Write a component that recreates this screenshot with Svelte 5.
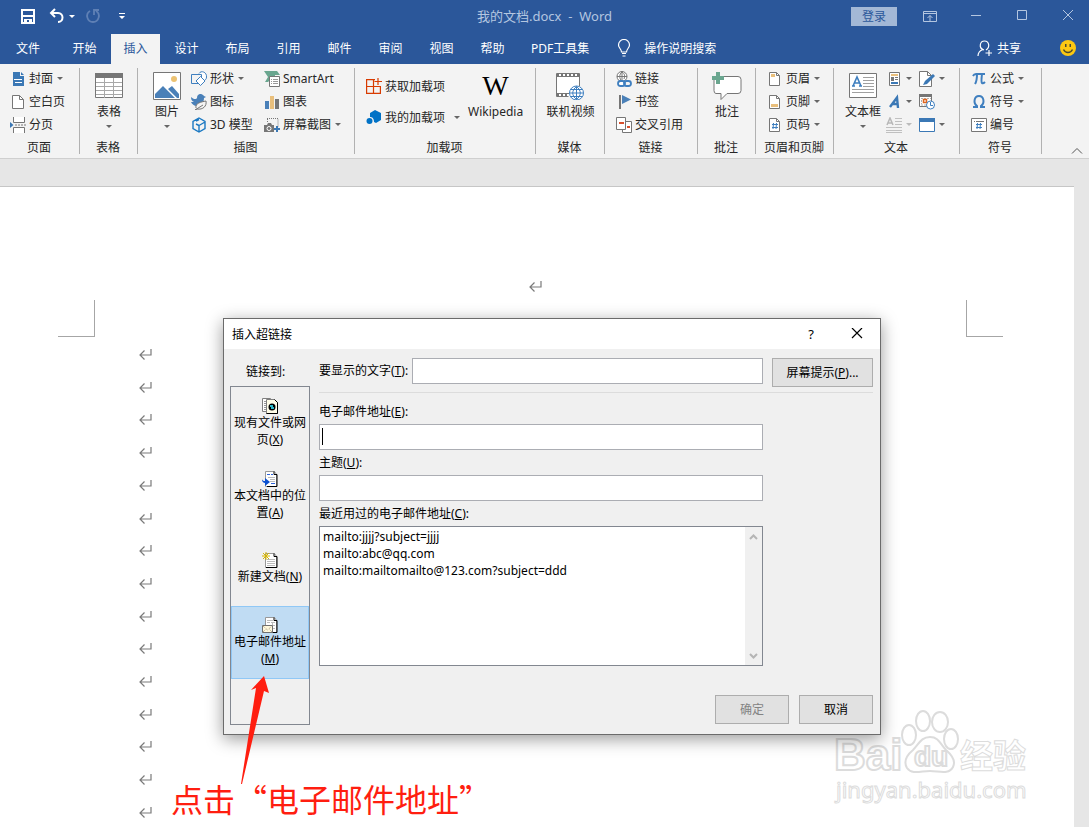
<script>
  const page = 'fill="#fff" stroke="#767676"';

  // Each icon: width, height, svg body
  const icons = {
    cover: [16, 16, '<path fill="#3b78b5" d="M3 1h7v4h4v10H3z"/><path fill="#3b78b5" d="M11 1l3 3h-3z"/><path fill="none" stroke="#fff" d="M4 9l1-1 1 1 1-1 1 1 1-1 1 1 1-1 1 1M5 11.500h7"/>'],
    blank: [16, 16, `<path ${page} d="M2.500 1.500h7l4 4v9h-11z"/><path fill="none" stroke="#767676" d="M9.500 1.500v4h4"/>`],
    pageBreak: [16, 16, '<path fill="#fff" d="M3 0h12v5H3zM3 10h12v6H3z"/><path fill="none" stroke="#767676" d="M3.500 0v5.500h11V0M3.500 16v-5.500h11V16"/><path stroke="#767676" d="M5 8h2M8 8h2M11 8h2M14 8h2"/><path fill="#3b78b5" d="M0 5l3.500 3L0 11z"/>'],
    table: [28, 28, '<path fill="#fff" stroke="#767676" d="M.5 1.500h27v24H.500z"/><path fill="#767676" d="M0 1h28v5H0z"/><path stroke="#a8a8a8" d="M1 10.500h26M1 14.500h26M1 18.500h26M1 22.500h26M9.500 6v20M18.500 6v20"/>'],
    picture: [28, 28, '<path fill="#fff" stroke="#767676" d="M.5.5h27v27H.500z"/><circle cx="21" cy="7" r="3" fill="#ecc272"/><path fill="#4a80b8" d="M2 26v-4l8-8 12 12zM15 17l4-3 7 8v4h-2z"/>'],
    shapes: [16, 16, '<path fill="#fff" stroke="#3f7fbf" d="M8 2.500C10-1 16 1 15.500 6c0 2-1 3-3 4"/><path fill="#f3f3f3" stroke="#3f7fbf" d="M.5 3.500h10v9H.500z"/><path fill="#fff" stroke="#3f7fbf" d="M9.500 5.500l4.500 4.500-4.500 4.500L5 10z"/>'],
    pictogram: [16, 16, '<path fill="#4a80b8" d="M0 3c2 2 5 3 6 1 0-5 5-5 7-2l2 1-2 1c0 5-3 8-7 8-3 0-5-2-6-4h3C1 7 0 6 0 3z"/><path fill="#f3f3f3" stroke="#767676" d="M5 14c-1-5 5-6 10-7 1 5-3 9-9 8l-2 1 8-5"/>'],
    model: [16, 16, '<path fill="none" stroke="#1a78c2" stroke-width="1.400" d="M8 1l6 3.500v7L8 15l-6-3.500v-7zM5 7l3 1.500V15M8 8.500L14 5M5 4l3-1.500"/>'],
    smartart: [16, 16, '<path fill="#6aa68f" d="M0 0h13l3 4h-5v4H7L4 11H1l3-5z"/><path fill="#fff" stroke="#767676" d="M5.500 5.500h10v10h-10z"/><path stroke="#999" d="M7 8.500h1M9 8.500h5M7 10.500h1M9 10.500h5M7 12.500h1M9 12.500h5"/>'],
    chart: [16, 16, '<path fill="#4a80b8" d="M1 7h4v8H1z"/><path fill="#e9bf7c" d="M6 2h4v13H6z"/><path fill="#767676" d="M11 5h4v10h-4z"/>'],
    screenshot: [16, 16, '<path fill="none" stroke="#767676" stroke-dasharray="1 1" d="M3 1.500h11v9M3.500 2v4"/><path fill="#767676" d="M0 8h3l1-2h3l1 2h2v7H0z"/><circle cx="5" cy="11.500" r="2" fill="none" stroke="#fff"/><path stroke="#3b78b5" stroke-width="2" d="M13 9v6M10 12h6"/>'],
    store: [16, 16, '<path fill="none" stroke="#d83b01" stroke-width="1.200" d="M9 1.600H.600v13.800h13.800V8.500H.600M7.500 1.600v13.800M12 0v7M8.500 3.500H16"/>'],
    addins: [16, 16, '<path fill="#0072c6" d="M9 1l6 3v7l-5 3-2-1c0-4-2-5-4-5V4z"/><circle cx="3.500" cy="12" r="3" fill="#0072c6"/>'],
    video: [28, 28, '<path fill="#fff" d="M1 2h23v22H1z"/><path fill="none" stroke="#767676" d="M.5 1.500v23h12M.5 1.500h23V14M1 4.500h23M1 21.500h12"/><path stroke="#767676" stroke-width="3" stroke-dasharray="2 2" d="M1 3h23M1 23h12"/><circle cx="20.500" cy="21" r="7" fill="#fff" stroke="#3f7fbf"/><path fill="none" stroke="#3f7fbf" d="M14 21h13M15 17.500h11M15 24.500h11M20.500 14.500v13M20.500 14.500c-5 4-5 9 0 13 5-4 5-9 0-13"/>'],
    link: [16, 16, '<circle cx="6" cy="5.500" r="5" fill="#fff" stroke="#767676"/><path fill="none" stroke="#767676" d="M1 5.500h10M6 0v9M6 1C3 3 3 8 6 10M6 1c3 2 3 4 2 7"/><rect x="2" y="10" width="7" height="5" rx="2.500" fill="#fff" stroke="#3f7fbf" stroke-width="1.800"/><rect x="8" y="10" width="7" height="5" rx="2.500" fill="none" stroke="#3f7fbf" stroke-width="1.800"/>'],
    bookmark: [16, 16, '<path fill="#767676" d="M3 1h2v14H3z"/><path fill="#4a80b8" d="M6 1l9 4.500L6 10z"/>'],
    crossRef: [16, 16, '<path fill="#fff" stroke="#767676" d="M6.500 4.500h9v11h-9z"/><path fill="#fff" stroke="#767676" d="M.5.5h9v12h-9z"/><path fill="#d9502e" d="M3 5h5v2H3zM11 9h3v2h-3z"/>'],
    comment: [30, 28, '<path fill="#fff" stroke="#767676" d="M5 4.500h21q3 0 3 3v11q0 3-3 3H15l-6 6v-6H4q-2 0-2-3V6"/><path fill="#6aa68f" d="M4 0h4v4h4v4H8v4H4V8H0V4h4z"/>'],
    header: [16, 16, `<path ${page} d="M2.500 1.500h7l3 3v10h-10z"/><path fill="none" stroke="#767676" d="M9.500 1.500v3h3"/><path fill="#e9bf7c" d="M4 3h4v3H4z"/>`],
    footer: [16, 16, `<path ${page} d="M2.500 1.500h7l3 3v10h-10z"/><path fill="none" stroke="#767676" d="M9.500 1.500v3h3"/><path fill="#e9bf7c" d="M4 10h7v3H4z"/>`],
    pageNo: [16, 16, `<path ${page} d="M2.500 1.500h7l3 3v10h-10z"/><path fill="none" stroke="#767676" d="M9.500 1.500v3h3"/><path stroke="#3f7fbf" d="M6.500 6l-.500 6M9.500 6l-.500 6M5 7.500h6M5 10.500h6"/>`],
    textBox: [28, 28, '<path fill="#fff" stroke="#767676" d="M.5 1.500h27v24H.500z"/><path fill="none" stroke="#3f7fbf" stroke-width="1.600" d="M4 14l4-9 4 9M5 11h6M3 14h3M10 14h3"/><path stroke="#a0a0a0" d="M14 5.500h11M14 8.500h11M14 11.500h11M14 14.500h11M3 17.500h22M3 20.500h22"/>'],
    parts: [16, 16, '<path fill="#fff" stroke="#767676" d="M3.500 1.500h10v13h-10z"/><path fill="#e9bf7c" d="M5 3h7v2H5z"/><path fill="#767676" d="M5 6h3v4H5zM9 6h3v1H9zM9 8h3v1H9z"/><path fill="#3b78b5" d="M5 11h7v2H5z"/>'],
    signature: [16, 16, `<path ${page} d="M.5.5h8l4 4v11H.500z"/><path fill="none" stroke="#767676" d="M8.500.5v4h4"/><path fill="#3b78b5" d="M14 3l2 2-8 8-4 1 2-4z"/>`],
    wordArt: [16, 16, '<path fill="none" stroke="#3b78b5" stroke-width="2.400" d="M4 13L11 3.500l1 10.500M6 10h6"/>'],
    dateTime: [16, 16, '<path fill="#fff" stroke="#767676" d="M.5 1.500h12v11H.500z"/><path fill="#767676" d="M0 0h13v3H0z"/><path stroke="#b0b0b0" stroke-dasharray="2 1" d="M2 4.500h10M2 11h10M2.500 6v4"/><path fill="#fff" stroke="#e0651e" stroke-width="1.500" d="M4.500 5.500h3v3h-3z"/><circle cx="11.500" cy="11" r="4" fill="#fff" stroke="#3f7fbf"/><path fill="none" stroke="#3f7fbf" d="M11.500 8v3.500h2.500"/>'],
    dropCap: [16, 16, '<path fill="none" stroke="#b8b8b8" stroke-width="1.500" d="M1 8l3-7 3 7M2 6h4"/><path stroke="#c0c0c0" d="M9 1.500h7M9 4.500h7M9 7.500h7M0 10.500h16M0 13.500h16M0 15.500h16"/>'],
    object: [16, 16, '<path fill="#fff" stroke="#3b78b5" d="M.5 1.500h15v13H.500z"/><path fill="#3b78b5" d="M0 1h16v4H0z"/>'],
    pi: [16, 16, '<path fill="none" stroke="#3f7fbf" stroke-width="2" d="M2 5q1-2 3-2h9M6 3q0 7-2 10M11 3q-1 8 0 9 1 1 3-1"/>'],
    omega: [16, 16, '<path fill="none" stroke="#3f7fbf" stroke-width="2" d="M2 13h4v-1C2 9 3 2 8 2s6 7 2 10v1h4"/>'],
    number: [16, 16, '<path fill="#fff" stroke="#767676" d="M.5 1.500h15v13H.500z"/><path stroke="#767676" d="M3 4.500h1M5 4.500h8"/><path stroke="#3f7fbf" d="M6.500 6l-.500 6M9.500 6l-.500 6M5 7.500h6M5 10.500h6"/>'],
    save: [16, 16, '<path fill="none" stroke="#fff" stroke-width="2" d="M2 2h12v13H2z"/><path fill="#fff" d="M2 7h12v2H2zM4 11h8v4H9v-3H7v3H4z"/>'],
    undo: [16, 16, '<path fill="none" stroke="#fff" stroke-width="2" d="M6 1L2 5l4 4M2 5h7c6 0 6 9 0 9"/>'],
    redo: [16, 16, '<path fill="none" stroke="#5f80b5" stroke-width="1.800" d="M5 3C0 6 2 14 8 14s8-8 3-11M14 2H9v5"/>'],
    customize: [8, 8, '<path fill="#fff" d="M1 1h6v1H1zM1 4h6L4 7z"/>'],
    ribbonOpts: [14, 12, '<path fill="none" stroke="#b4c6e0" d="M.5 1.500h13v10H.500zM1 3.500h12M7 11V5.500M4.500 8L7 5.500 9.500 8"/>'],
    minimize: [12, 12, '<path stroke="#b4c6e0" d="M1 5.500h10"/>'],
    maximize: [12, 12, '<path fill="none" stroke="#b4c6e0" d="M1.500.5h9v9h-9z"/>'],
    closeWin: [12, 12, '<path stroke="#b4c6e0" d="M1 0l10 10M11 0L1 10"/>'],
    closeDlg: [12, 12, '<path stroke="#000" stroke-width="1.200" d="M1 0l10 10M11 0L1 10"/>'],
    bulb: [14, 18, '<path fill="none" stroke="#fff" stroke-width="1.200" d="M4.500 13c0-3-3-4-3-7a5.500 5.500 0 0 1 11 0c0 3-3 4-3 7zM5 14.500h4M5.500 17h3"/>'],
    share: [16, 18, '<path fill="none" stroke="#fff" stroke-width="1.200" d="M7 11C1 9 3 2 7.500 2s6 6 1.500 9M6 10.500c-3 1-5 3-5 6.500M8.500 14H15M12 11v6"/>'],
    smile: [16, 16, '<circle cx="8" cy="8" r="8" fill="#fcc812"/><path fill="none" stroke="#4a4a30" stroke-width="1.400" d="M3.500 9.500c2 4 7 4 9 0"/><path fill="#4a4a30" d="M5 4h1.500v3H5zM9.500 4H11v3H9.500z"/>'],
    collapse: [12, 8, '<path fill="none" stroke="#555" d="M1 6.500l5-5 5 5"/>'],
    enter: [13, 12, '<path fill="none" stroke="#7a7a7a" stroke-width="1.200" d="M12 1v6H1M5.500 2.500L1 7l4.500 4.500"/>'],
    up: [9, 6, '<path fill="none" stroke="#b5b5b5" stroke-width="2" d="M1 5l3.500-3.500L8 5"/>'],
    down: [9, 6, '<path fill="none" stroke="#b5b5b5" stroke-width="2" d="M1 1l3.500 3.500L8 1"/>'],
    existing: [16, 16, '<path fill="#fff" stroke="#808080" d="M.5.5h8v13h-8z"/><path stroke="#999" d="M2 3.500h2M2 5.500h2M2 7.500h2M2 9.500h2M2 11.500h2"/><path fill="#fffde8" stroke="#808080" d="M4.500 1.500h8l3 3v11h-11z"/><path fill="none" stroke="#000" d="M12.500 1.500l3 3v11h-11"/><circle cx="10" cy="9" r="3.500" fill="#000"/><path fill="#2cb7c9" d="M8 7h3v2h1v2H9V9H8z"/>'],
    place: [16, 16, '<path fill="#fff" stroke="#999" d="M3.500.5h9l2 3v12h-11z"/><path fill="none" stroke="#000" d="M12 .5v3h3v12H5"/><path stroke="#2b62d9" d="M5 3.500h3M9 3.500h2M9 12.500h4"/><path stroke="#bbb" d="M6 6.500h7M8 8.500h5M8 10.500h5"/><path fill="#0b50d0" d="M0 4c-1 5 1 6 3 6V7l5 4-5 4v-3C0 12-1 8 0 4z"/>'],
    newDoc: [16, 16, '<path fill="#fff" stroke="#999" d="M3.500 1.500h9l2 3v11h-11z"/><path fill="none" stroke="#000" d="M12 1.500v3h3v11H4"/><path stroke="#bbb" d="M5 7.500h8M5 9.500h8M5 11.500h8M5 13.500h8"/><path stroke="#d7b500" d="M4 0v8M0 4h8M1 1l6 6M7 1L1 7"/>'],
    mail: [16, 16, '<path fill="#fff" stroke="#999" d="M3.500.5h9l2 3v12h-11z"/><path fill="none" stroke="#000" d="M12 .5v3h3v12h-5"/><path stroke="#bbb" d="M5 3.500h6M5 5.500h3M9 5.500h4M10.500 5.500v3M11 8.500h2M11 11.500h2"/><path fill="#fff8dc" stroke="#707070" d="M.5 8.500h10v7H.500z"/><path fill="none" stroke="#a49a80" stroke-dasharray="1 1" d="M1 9l4.500 4L10 9M1 15l3-3M10 15l-3-3"/>']
  };

  const tabs = ['开始', '插入', '设计', '布局', '引用', '邮件', '审阅', '视图', '帮助', 'PDF工具集'];

  // a column is either a list of [icon, label, has menu] or one large button
  const groups = [
    { name: '页面', cls: 'g-page', cols: [[['cover', '封面', true], ['blank', '空白页'], ['pageBreak', '分页']]] },
    { name: '表格', cls: 'g-table', cols: [{ icon: 'table', label: '表格', menu: true }] },
    {
      name: '插图',
      cls: 'g-illus',
      cols: [
        { icon: 'picture', label: '图片', menu: true },
        [['shapes', '形状', true], ['pictogram', '图标'], ['model', '3D 模型']],
        [['smartart', 'SmartArt'], ['chart', '图表'], ['screenshot', '屏幕截图', true]]
      ]
    },
    { name: '加载项', cls: 'g-addins', cols: [[['store', '获取加载项'], ['addins', '我的加载项', true]], { wiki: true, label: 'Wikipedia' }] },
    { name: '媒体', cls: 'g-media', cols: [{ icon: 'video', label: '联机视频' }] },
    { name: '链接', cls: 'g-links', cols: [[['link', '链接'], ['bookmark', '书签'], ['crossRef', '交叉引用']]] },
    { name: '批注', cls: 'g-comment', cols: [{ icon: 'comment', label: '批注' }] },
    { name: '页眉和页脚', cls: 'g-header', cols: [[['header', '页眉', true], ['footer', '页脚', true], ['pageNo', '页码', true]]] },
    {
      name: '文本',
      cls: 'g-text',
      cols: [
        { icon: 'textBox', label: '文本框', menu: true },
        [['parts', '', true], ['wordArt', '', true], ['dropCap', '', true]],
        [['signature', '', true], ['dateTime', ''], ['object', '', true]]
      ]
    },
    { name: '符号', cls: 'g-symbols', cols: [[['pi', '公式', true], ['omega', '符号', true], ['number', '编号']]] }
  ];

  const targets = [
    { icon: 'existing', lines: ['现有文件或网', '页'], key: 'X' },
    { icon: 'place', lines: ['本文档中的位', '置'], key: 'A' },
    { icon: 'newDoc', lines: ['新建文档'], key: 'N' },
    { icon: 'mail', lines: ['电子邮件地址', ''], key: 'M' }
  ];

  const recent = ['mailto:jjjj?subject=jjjj', 'mailto:abc@qq.com', 'mailto:mailtomailto@123.com?subject=ddd'];

  let selected = $state('M');
  let displayText = $state('');
  let email = $state('');
  let subject = $state('');
</script>

{#snippet icon(name)}
  {@const [w, h, body] = icons[name]}
  <svg width={w} height={h} viewBox="0 0 {w} {h}" aria-hidden="true">{@html body}</svg>
{/snippet}

{#snippet caret()}
  <svg class="caret" width="6" height="3" viewBox="0 0 6 3" aria-hidden="true"><path d="M0 0h6L3 3z" /></svg>
{/snippet}

<div class="window" lang="zh-CN">
  <header class="titlebar">
    <div class="quick">
      <button aria-label="保存">{@render icon('save')}</button>
      <button class="undo" aria-label="撤消">{@render icon('undo')}{@render caret()}</button>
      <button class="redo" aria-label="恢复">{@render icon('redo')}</button>
      <button aria-label="自定义">{@render icon('customize')}</button>
    </div>
    <div class="title">我的文档.docx&nbsp; - &nbsp;Word</div>
    <div class="controls">
      <button class="login">登录</button>
      <button class="ctl" aria-label="功能区显示选项">{@render icon('ribbonOpts')}</button>
      <button class="ctl" aria-label="最小化">{@render icon('minimize')}</button>
      <button class="ctl" aria-label="最大化">{@render icon('maximize')}</button>
      <button class="ctl" aria-label="关闭窗口">{@render icon('closeWin')}</button>
    </div>
  </header>

  <nav class="tabs">
    <button class="tab file">文件</button>
    {#each tabs as tab}
      <button class="tab" class:active={tab === '插入'}>{tab}</button>
    {/each}
    <button class="tell">{@render icon('bulb')}操作说明搜索</button>
    <button class="share">{@render icon('share')}共享</button>
    <button class="smile" aria-label="反馈">{@render icon('smile')}</button>
  </nav>

  <div class="ribbon">
    {#each groups as group}
      <section class="group {group.cls}">
        <div class="group-body">
          {#each group.cols as col}
            {#if Array.isArray(col)}
              <div class="col">
                {#each col as [name, label, menu]}
                  <button class="item" class:dim={name === 'dropCap'} aria-label={label || name}>
                    <span class="item-icon">{@render icon(name)}</span>
                    {#if label}<span>{label}</span>{/if}
                    {#if menu}{@render caret()}{/if}
                  </button>
                {/each}
              </div>
            {:else}
              <button class="big">
                <span class="big-icon">
                  {#if col.wiki}<span class="wiki">W</span>{:else}{@render icon(col.icon)}{/if}
                </span>
                <span>{col.label}</span>
                {#if col.menu}{@render caret()}{/if}
              </button>
            {/if}
          {/each}
        </div>
        <div class="group-name">{group.name}</div>
      </section>
    {/each}
    <button class="collapse" aria-label="折叠功能区">{@render icon('collapse')}</button>
  </div>

  <main class="workspace">
    <div class="page">
      <div class="page-header">{@render icon('enter')}</div>
      <div class="corners">
        <div class="corner left"></div>
        <div class="corner right"></div>
      </div>
      <div class="paragraphs">
        {#each Array(15) as _}
          {@render icon('enter')}
        {/each}
      </div>
    </div>
  </main>

  <svg class="watermark" width="204" height="100" viewBox="0 0 204 100">
    <g class="outline">
      <text x="3" y="64" font-size="44" font-weight="700">Bai</text>
      <ellipse cx="78" cy="29" rx="7" ry="10" />
      <ellipse cx="92" cy="15" rx="7" ry="10" />
      <ellipse cx="109" cy="16" rx="8" ry="10" />
      <ellipse cx="120" cy="33" rx="7" ry="10" />
      <path d="M99 31c9 0 10 7 16 13 7 6 10 11 7 17-4 8-14 4-23 4s-18 4-23-3c-4-7 0-13 6-18 6-6 8-13 17-13z" />
      <text x="83" y="60" font-size="28" font-weight="700">du</text>
      <text class="cjk" x="129" y="62" font-size="33" font-weight="700">经验</text>
      <text class="site" x="5" y="92" font-size="22">jingyan.baidu.com</text>
    </g>
  </svg>

  <div class="dialog" role="dialog" aria-labelledby="dlg-title">
    <div class="dlg-bar">
      <span id="dlg-title">插入超链接</span>
      <button class="help" aria-label="帮助">?</button>
      <button class="close" aria-label="关闭">{@render icon('closeDlg')}</button>
    </div>
    <div class="dlg-body">
      <div class="side">
        <div class="side-label">链接到:</div>
        <div class="targets">
          {#each targets as target}
            <button class="target" class:selected={selected === target.key} onclick={() => (selected = target.key)}>
              {@render icon(target.icon)}
              {#each target.lines as line, i}
                <span>{line}{#if i === target.lines.length - 1}(<u>{target.key}</u>){/if}</span>
              {/each}
            </button>
          {/each}
        </div>
      </div>

      <div class="form">
        <div class="top-row">
          <label for="display">要显示的文字(<u>T</u>):</label>
          <input id="display" type="text" bind:value={displayText} />
          <button class="btn tip">屏幕提示(<u>P</u>)...</button>
        </div>
        <div class="fields">
          <label for="email">电子邮件地址(<u>E</u>):</label>
          <div class="caret-box">
            <input id="email" type="text" bind:value={email} />
            {#if !email}<span class="text-caret"></span>{/if}
          </div>
          <label for="subject">主题(<u>U</u>):</label>
          <input id="subject" type="text" bind:value={subject} />
          <div class="field-label" id="recent-label">最近用过的电子邮件地址(<u>C</u>):</div>
          <div class="listbox">
            <ul aria-labelledby="recent-label">
              {#each recent as address}
                <li>{address}</li>
              {/each}
            </ul>
            <div class="scrollbar">
              {@render icon('up')}
              {@render icon('down')}
            </div>
          </div>
        </div>
        <div class="actions">
          <button class="btn" disabled>确定</button>
          <button class="btn">取消</button>
        </div>
      </div>
    </div>
  </div>

  <svg class="arrow" width="30" height="110" viewBox="0 0 30 110" aria-hidden="true">
    <path d="M24 1L11 15l5-2L1 109h1l22-93 5 2z" />
  </svg>
  <div class="note">点击“电子邮件地址”</div>
</div>

<style>
  :global(body) {
    background: #e6e6e6;
  }

  .window {
    position: relative;
    display: flex;
    flex-direction: column;
    min-height: 100vh;
    overflow: hidden;
    font-family: "Noto Sans", "Noto Sans CJK SC", sans-serif;
    font-size: 12px;
    line-height: 17px;
    color: #262626;
  }

  button,
  input {
    font: inherit;
    color: inherit;
    box-sizing: border-box;
  }

  button {
    display: flex;
    align-items: center;
    padding: 0;
    border: 0;
    background: none;
    white-space: nowrap;
  }

  svg {
    display: block;
    flex: none;
  }

  .caret {
    fill: #666;
  }

  /* title bar */
  .titlebar {
    display: grid;
    grid-template-columns: 1fr auto 1fr;
    align-items: center;
    height: 32px;
    background: #2b579a;
    color: #b4c6e0;
  }

  .quick {
    display: flex;
    align-items: center;
    padding-left: 20px;
  }

  .undo {
    gap: 4px;
    margin-left: 13px;
  }

  .undo .caret {
    fill: #fff;
  }

  .redo {
    margin: 0 17px 0 10px;
  }

  .title {
    font-size: 13px;
  }

  .controls {
    display: flex;
    align-items: center;
    justify-content: flex-end;
    gap: 4px;
  }

  .login {
    height: 19px;
    padding: 0 11px;
    margin-right: 8px;
    background: #a3b8d6;
    color: #2b579a;
  }

  .ctl {
    justify-content: center;
    width: 42px;
    height: 32px;
  }

  /* tabs */
  .tabs {
    display: flex;
    align-items: center;
    gap: 2px;
    height: 32px;
    background: #2b579a;
    color: #fff;
  }

  .tab {
    justify-content: center;
    min-width: 49px;
    height: 30px;
    padding: 0 12px 2px;
    align-self: flex-end;
  }

  .file {
    min-width: 56px;
    margin-right: 2px;
  }

  .active {
    background: #f3f3f3;
    color: #2b579a;
  }

  .tell {
    gap: 13px;
    margin-left: 14px;
  }

  .share {
    gap: 4px;
    margin-left: auto;
  }

  .smile {
    margin: 0 13px 0 37px;
  }

  /* ribbon */
  .ribbon {
    display: flex;
    height: 91px;
    padding-top: 3px;
    background: #f3f3f3;
    border-bottom: 1px solid #cfcfcf;
  }

  .group {
    position: relative;
    display: flex;
    flex-direction: column;
    flex: none;
  }

  .group::after {
    content: "";
    position: absolute;
    top: 1px;
    right: 0;
    bottom: 4px;
    width: 1px;
    background: #b1b1b1;
  }

  .group-body {
    display: flex;
    flex: none;
    height: 69px;
    padding: 0 11px;
  }

  .group-name {
    padding-right: 2px;
    text-align: center;
    line-height: 24px;
  }

  .g-page { width: 80px; }
  .g-table,
  .g-comment { width: 58px; }
  .g-illus { width: 217px; }
  .g-addins { width: 181px; }
  .g-media { width: 69px; }
  .g-links { width: 93px; }
  .g-header { width: 78px; }
  .g-text { width: 126px; }
  .g-symbols { width: 82px; }

  .g-page .group-body {
    padding: 0 10px;
  }

  .g-table .group-body,
  .g-media .group-body,
  .g-comment .group-body {
    justify-content: center;
    padding: 0;
  }

  .col {
    display: flex;
    flex-direction: column;
    justify-content: center;
  }

  .g-illus .col {
    min-width: 73px;
  }

  .g-illus .big {
    min-width: 36px;
    margin-right: 6px;
  }

  .g-addins .col {
    gap: 8px;
    margin-right: 8px;
  }

  .g-addins .item .caret {
    margin-left: 6px;
  }

  .g-text .group-body {
    gap: 5px;
  }

  .g-text .col + .col {
    margin-left: 2px;
  }

  .item {
    gap: 3px;
    height: 23px;
  }

  .item .caret {
    margin-left: 1px;
  }

  .item-icon {
    width: 16px;
  }

  .dim .caret {
    fill: #bbb;
  }

  .big {
    flex-direction: column;
    padding-top: 5px;
  }

  .big-icon {
    height: 28px;
    margin-bottom: 3px;
  }

  .big .caret {
    margin-top: 5px;
  }

  .wiki {
    font-family: "Liberation Serif", serif;
    font-size: 28px;
    line-height: 28px;
    color: #000;
  }

  .collapse {
    align-self: flex-end;
    margin: 0 6px 3px auto;
  }

  /* document */
  .workspace {
    display: flex;
    flex: 1;
    padding: 27px 15px 0 0;
  }

  .page {
    display: flex;
    flex-direction: column;
    flex: 1;
    border-top: 1px solid #c6c6c6;
    background: #fff;
  }

  .page-header {
    display: flex;
    justify-content: center;
    padding: 93px 4px 8px 0;
  }

  .corners {
    display: flex;
    justify-content: space-between;
    padding: 0 71px 0 58px;
  }

  .corner {
    width: 36px;
    height: 36px;
    border-bottom: 1px solid #a6a6a6;
  }

  .left {
    border-right: 1px solid #a6a6a6;
  }

  .right {
    border-left: 1px solid #a6a6a6;
  }

  .paragraphs {
    display: flex;
    flex: 1;
    flex-direction: column;
    justify-content: space-between;
    padding: 11px 0 9px 139px;
  }

  .watermark {
    position: absolute;
    right: 54px;
    bottom: 21px;
  }

  .outline {
    fill: #fff;
    stroke: #dcdcdc;
    stroke-width: 2px;
    font-family: "Liberation Sans", sans-serif;
  }

  .cjk {
    font-family: "Noto Sans CJK SC", sans-serif;
    stroke-width: 1px;
  }

  .site {
    font-family: "Noto Sans", sans-serif;
    stroke-width: 1px;
  }

  /* dialog */
  .dialog {
    position: absolute;
    top: 318px;
    left: 223px;
    width: 656px;
    border: 1px solid #6b6b6b;
    background: #f0f0f0;
    box-shadow: 0 4px 16px rgba(0, 0, 0, 0.4);
    color: #000;
  }

  .dlg-bar {
    display: flex;
    align-items: center;
    height: 30px;
    padding-left: 8px;
    background: #fff;
  }

  .help {
    justify-content: center;
    width: 46px;
    height: 30px;
    margin-left: auto;
    font-size: 13px;
  }

  .close {
    justify-content: center;
    width: 46px;
    height: 30px;
  }

  .dlg-body {
    display: flex;
    gap: 9px;
    padding: 8px 7px 9px 6px;
  }

  .side {
    display: flex;
    flex-direction: column;
    width: 80px;
  }

  .side-label {
    padding: 6px 0 6px 16px;
  }

  .targets {
    flex: 1;
    border: 1px solid #828790;
  }

  .target {
    flex-direction: column;
    justify-content: center;
    width: 100%;
    height: 73px;
    padding-bottom: 2px;
    border: 1px solid transparent;
  }

  .selected {
    background: #c0dcf3;
    border-color: #90c8f6;
  }

  .form {
    flex: 1;
    padding-top: 1px;
  }

  .top-row {
    display: flex;
    align-items: flex-start;
    padding: 0 0 5px;
    border-bottom: 1px solid #dcdcdc;
  }

  .top-row label {
    margin-right: 4px;
    line-height: 26px;
  }

  .top-row input {
    flex: 1;
    min-width: 0;
    margin-right: 9px;
  }

  input {
    display: block;
    width: 100%;
    height: 26px;
    padding: 0 3px;
    border: 1px solid #abadb3;
    border-radius: 0;
    background: #fff;
    outline: none;
  }

  .btn {
    justify-content: center;
    width: 74px;
    height: 29px;
    border: 1px solid #adadad;
    background: #e1e1e1;
  }

  .btn:disabled {
    color: #838383;
  }

  .tip {
    width: 101px;
  }

  .fields {
    padding: 6px 110px 0 0;
  }

  .fields label,
  .field-label {
    display: block;
    line-height: 25px;
  }

  .caret-box {
    position: relative;
  }

  .text-caret {
    position: absolute;
    top: 4px;
    left: 3px;
    width: 1px;
    height: 17px;
    background: #000;
  }

  .listbox {
    display: flex;
    height: 138px;
    border: 1px solid #828790;
    background: #fff;
  }

  ul {
    flex: 1;
    margin: 0;
    padding: 1px 3px;
    list-style: none;
  }

  .scrollbar {
    display: flex;
    flex-direction: column;
    align-items: center;
    justify-content: space-between;
    width: 17px;
    padding: 7px 0 6px;
    background: #f0f0f0;
  }

  .actions {
    display: flex;
    justify-content: flex-end;
    gap: 10px;
    padding: 29px 0 1px;
  }

  /* annotation */
  .arrow {
    position: absolute;
    top: 675px;
    left: 240px;
    fill: #ff1e10;
  }

  .note {
    position: absolute;
    top: 774px;
    left: 171px;
    font-family: "Noto Sans CJK SC", sans-serif;
    font-size: 32px;
    line-height: 48px;
    color: #ff1e10;
  }
</style>
